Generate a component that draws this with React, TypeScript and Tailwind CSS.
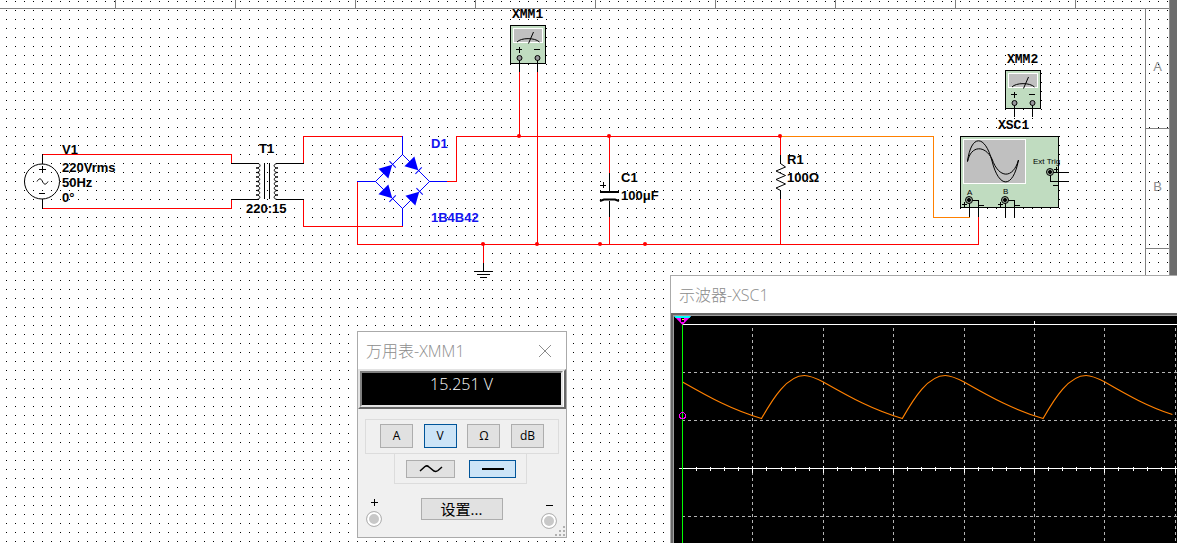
import { useState } from 'react'
import type { ReactNode } from 'react'

const UI_FONT = "font-['Open_Sans','Noto_Sans_CJK_SC',sans-serif]"
const LABEL_FONT = "font-['Liberation_Sans',Arial,sans-serif]"
const MONO_FONT = "font-['Liberation_Mono','Courier_New',monospace]"

function DotGrid() {
  return (
    <div
      aria-hidden="true"
      className="absolute inset-0 bg-[conic-gradient(from_270deg_at_1px_1px,#000_90deg,transparent_0)] bg-[length:9px_9px] bg-[position:6px_1px]"
    />
  )
}

function Label({ x, y, children, color = 'fill-black' }: { x: number; y: number; children: ReactNode; color?: string }) {
  return (
    <text x={x} y={y} className={`${LABEL_FONT} text-[13px] font-bold ${color}`}>
      {children}
    </text>
  )
}

function MonoLabel({ x, y, children }: { x: number; y: number; children: ReactNode }) {
  return (
    <text x={x} y={y} className={`${MONO_FONT} fill-black text-[13px] font-bold`}>
      {children}
    </text>
  )
}

function Meter({ x, y }: { x: number; y: number }) {
  return (
    <g transform={`translate(${x} ${y})`} fill="none" stroke="#000">
      <rect x="0.5" y="0.5" width="35" height="38" fill="#c0dcc0" shapeRendering="crispEdges" />
      <rect x="3.5" y="3.5" width="29" height="14" fill="#c0c0c0" stroke="#fff" shapeRendering="crispEdges" />
      <path d="M7 17 C11 12.5 25 12.5 29.500 17 M18.500 18.500 L23.500 7" />
      <path d="M6 24.500h6M9.500 22v6M24 24.500h6" shapeRendering="crispEdges" />
      <path d="M9.500 33v14M27.500 33v14" shapeRendering="crispEdges" />
      <circle cx="9.500" cy="33" r="2.500" fill="#98989c" />
      <circle cx="27.500" cy="33" r="2.500" fill="#98989c" />
    </g>
  )
}

function Diode({ x, y, angle }: { x: number; y: number; angle: number }) {
  return (
    <g transform={`translate(${x} ${y}) rotate(${angle})`}>
      <path d="M-6.500 -7 L6 0 L-6.500 7 Z" fill="#00f" />
      <path d="M6.500 -4.500 V4.500" stroke="#00f" />
    </g>
  )
}

function Terminal({ x, y }: { x: number; y: number }) {
  return (
    <g stroke="#000">
      <circle cx={x} cy={y} r="3.500" fill="#9aa89a" />
      <circle cx={x} cy={y} r="1.500" fill="#000" />
    </g>
  )
}

const junctions = [
  [519, 136], [609, 136], [780, 136], [483, 244], [537, 244], [600, 244], [645, 244],
]

function Schematic() {
  return (
    <svg className="absolute inset-0 h-full w-full" role="img" aria-label="Bridge rectifier circuit">
      <g fill="none" shapeRendering="crispEdges">
        <g stroke="#f00">
          <path d="M42.500 154.500H231.500V163M42.500 208.500H231.500V199" />
          <path d="M303.500 163V136.500H402.500M303.500 199V226.500H402.500" />
          <path d="M357.500 181V244.500H978.500V217" />
          <path d="M447 181.500H456.500V136.500H780" />
          <path d="M519.500 72V136M537.500 72V244M483.500 244V263" />
          <path d="M609.500 136V173M609.500 217V244M780.500 136V155M780.500 199V244" />
        </g>
        <path stroke="#ff8000" d="M781 136.500H933.500V217.500H970" />
        <g stroke="#00f">
          <path d="M402.500 136V154M402.500 208V226M357 181.500H376M429 181.500H447" />
        </g>
        <g stroke="#000">
          <path d="M42.500 155V164M42.500 199V208M231 163.500H259M231 199.500H259M277 163.500H304M277 199.500H304" />
          <path d="M264.500 163V199M269.500 163V199" />
          <path d="M39 169.500h7M42.500 166v7M39 193.500h6" />
          <path d="M483.500 263V271M474 271.500H493M477 274.500H490M480 277.500H487" />
          <path d="M609.500 173V191M609.500 201V217M600 185.500h6M603.500 182v6" />
          <path d="M780.500 155V164M780.500 190V199" />
        </g>
      </g>

      <g fill="none" stroke="#000">
        <circle cx="42" cy="181.500" r="17.500" />
        <path d="M37 181.500 C39 178 41 178 42.500 181.500 S46 185 48 181.500" />
        <path d="M258 163.500C261 164 261 168 256 168C261 168 261 172.500 256 172.500C261 172.500 261 177 256 177C261 177 261 181.500 256 181.500C261 181.500 261 186 256 186C261 186 261 190.500 256 190.500C261 190.500 261 195 256 195C261 195 261 199 257 199.500" />
        <path d="M277 163.500C273 164 273 168 278 168C273 168 273 172.500 278 172.500C273 172.500 273 177 278 177C273 177 273 181.500 278 181.500C273 181.500 273 186 278 186C273 186 273 190.500 278 190.500C273 190.500 273 195 278 195C273 195 273 199 277 199.500" />
        <path d="M600 192H619" strokeWidth="2" />
        <path d="M600 201 L604 199.500 H615 L619 201" strokeWidth="2" />
        <path d="M780.500 163.500L785.500 167L776 171L785.500 175.500L776 179.500L785.500 184L776 188L780.500 190.500" />
      </g>

      <path d="M402.500 154.500L429.500 181.500L402.500 208.500L375.500 181.500Z" fill="none" stroke="#00f" />
      <Diode x={388} y={169} angle={-45} />
      <Diode x={414} y={166} angle={45} />
      <Diode x={388} y={194} angle={45} />
      <Diode x={415} y={196} angle={-45} />

      {junctions.map(([x, y]) => (
        <circle key={`${x}-${y}`} cx={x} cy={y} r="2" fill="#f00" />
      ))}

      <Meter x={510} y={25} />
      <Meter x={1005} y={70} />

      <g fill="none" stroke="#000">
        <rect x="960.500" y="136.500" width="98" height="71" fill="#c0dcc0" shapeRendering="crispEdges" />
        <rect x="963.500" y="139.500" width="62" height="44" fill="#c0c0c0" stroke="#fff" shapeRendering="crispEdges" />
        <path d="M967.500 161.500C971 134 985 134 992 161C999 189 1013 189 1018.500 160" />
        <path d="M967.500 161.500C971 145 985 145 992 159C999 179 1013 179 1018.500 160" />
        <path
          shapeRendering="crispEdges"
          d="M969.500 200V217M969.500 200.500H978.500V217M1005.500 200V217M1005.500 200.500H1014.500V217M1050.500 172.500H1069M1050.500 172V181.500H1069"
        />
        <path
          shapeRendering="crispEdges"
          d="M962 204.500h5M964.500 202v5M979 205.500h5M998 204.500h5M1000.500 202v5M1015 205.500h5M1054 169.500h5M1056.500 167v5M1053 185.500h5"
        />
      </g>
      <Terminal x={969} y={200} />
      <Terminal x={1005} y={200} />
      <Terminal x={1050} y={172} />

      <Label x={62} y={154}>V1</Label>
      <Label x={62} y={172}>220Vrms</Label>
      <Label x={62} y={187}>50Hz</Label>
      <Label x={62} y={202}>0°</Label>
      <Label x={259} y={153}>T1</Label>
      <Label x={246} y={213}>220:15</Label>
      <Label x={431} y={148} color="fill-[#1414f0]">D1</Label>
      <Label x={431} y={222} color="fill-[#1414f0]">1B4B42</Label>
      <Label x={621} y={182}>C1</Label>
      <Label x={621} y={200}>100μF</Label>
      <Label x={787} y={164}>R1</Label>
      <Label x={787} y={182}>100Ω</Label>
      <MonoLabel x={512} y={18}>XMM1</MonoLabel>
      <MonoLabel x={1007} y={63}>XMM2</MonoLabel>
      <MonoLabel x={998} y={129}>XSC1</MonoLabel>
      <g className={`${LABEL_FONT} fill-black text-[8px]`}>
        <text x="1033" y="164">Ext Trig</text>
        <text x="967" y="195">A</text>
        <text x="1003" y="194">B</text>
      </g>
    </svg>
  )
}

function TopRuler() {
  return (
    <div className="flex h-[9px] w-full overflow-hidden border-b border-[#808080]">
      <div className="w-[116px] shrink-0 border-r border-[#808080]" />
      {Array.from({ length: 8 }, (_, i) => (
        <div key={i} className="w-[120px] shrink-0 border-r border-[#808080]" />
      ))}
    </div>
  )
}

function SideRuler() {
  return (
    <div className={`flex w-6 shrink-0 flex-col border-l border-[#808080] text-[13px] text-[#8c8c8c] ${LABEL_FONT}`}>
      {['A', 'B', ''].map((zone, i) => (
        <div key={i} className="flex h-[120px] items-center justify-center border-b border-[#808080] pb-1">
          {zone}
        </div>
      ))}
    </div>
  )
}

function MeterButton({
  label,
  active,
  onClick,
  size,
  children,
}: {
  label: string
  active: boolean
  onClick: () => void
  size: string
  children: ReactNode
}) {
  return (
    <button
      type="button"
      aria-label={label}
      aria-pressed={active}
      onClick={onClick}
      className={`flex items-center justify-center border text-xs text-black ${size} ${
        active ? 'border-[#005499] bg-[#cce4f7]' : 'border-[#adadad] bg-[#e1e1e1]'
      }`}
    >
      {children}
    </button>
  )
}

function Socket() {
  return <span className="block h-4 w-4 rounded-full border border-[#b4b4b4] bg-[#c8c8c8] shadow-[inset_0_0_0_2px_#fff]" />
}

function Multimeter() {
  const [quantity, setQuantity] = useState('V')
  const [mode, setMode] = useState('DC')
  return (
    <section
      aria-label="万用表-XMM1"
      className={`absolute top-[331px] left-[357px] flex w-[210px] flex-col border border-[#aaa] bg-[#f0f0f0] ${UI_FONT}`}
    >
      <header className="flex h-[37px] items-center justify-between bg-white pr-3.5 pl-2">
        <h2 className="text-base font-light text-[#8c8c8c]">万用表-XMM1</h2>
        <button type="button" aria-label="关闭" className="text-[#8c8c8c]">
          <svg width="14" height="14" viewBox="0 0 14 14" fill="none" stroke="currentColor">
            <path d="M1 1L13 13M13 1L1 13" />
          </svg>
        </button>
      </header>
      <div className="border-2 border-t-[#e3e3e3] border-r-[#696969] border-b-[#696969] border-l-[#e3e3e3] bg-white pr-px">
        <div className="border-2 border-t-[#808080] border-r-[#e3e3e3] border-b-[#e3e3e3] border-l-[#808080]">
          <output className="block h-8 bg-black text-center text-base leading-[22px] font-light text-white">15.251 V</output>
        </div>
      </div>
      <div className="flex flex-col px-[7px] pt-2.5">
        <div className="flex w-full justify-between border border-[#dcdcdc] px-3.5 pt-1 pb-[5px]">
          {['A', 'V', 'Ω', 'dB'].map((q) => (
            <MeterButton key={q} label={q} active={quantity === q} onClick={() => setQuantity(q)} size="h-6 w-[33px]">
              {q}
            </MeterButton>
          ))}
        </div>
        <div className="-mt-px ml-[29px] flex w-[133px] justify-between border border-[#dcdcdc] pt-1.5 pr-2.5 pb-[5px] pl-[11px]">
          <MeterButton label="AC" active={mode === 'AC'} onClick={() => setMode('AC')} size="h-[18px] w-[49px]">
            <svg width="24" height="10" viewBox="0 0 24 10" fill="none" stroke="#000" strokeWidth="1.500">
              <path d="M1 7L6 2.500Q8 1 10 3L15 7Q17 8 19 6.500L23 3" />
            </svg>
          </MeterButton>
          <MeterButton label="DC" active={mode === 'DC'} onClick={() => setMode('DC')} size="h-[18px] w-[47px]">
            <span className="h-0.5 w-[22px] bg-black" />
          </MeterButton>
        </div>
      </div>
      <footer className="flex h-[53px] items-start justify-between pt-3.5 pr-[9px] pl-2">
        <div className="flex flex-col items-center gap-px">
          <svg width="7" height="12" viewBox="0 0 7 12" stroke="#000" role="img" aria-label="plus" shapeRendering="crispEdges">
            <path d="M0 4.500H7M3.500 1V8" />
          </svg>
          <Socket />
        </div>
        <button type="button" className="flex h-[22px] w-[82px] items-center justify-center border border-[#adadad] bg-[#e1e1e1] text-[15px] text-black">
          设置...
        </button>
        <div className="flex flex-col items-center gap-px pt-0.5">
          <svg width="7" height="12" viewBox="0 0 7 12" stroke="#000" role="img" aria-label="minus" shapeRendering="crispEdges">
            <path d="M0 5.500H7" />
          </svg>
          <Socket />
        </div>
      </footer>
      <svg className="absolute right-0 bottom-0" width="11" height="11" fill="#b0b0b0" aria-hidden="true">
        <path d="M8 0h2v2h-2zM4 4h2v2h-2zM8 4h2v2h-2zM0 8h2v2h-2zM4 8h2v2h-2zM8 8h2v2h-2z" />
      </svg>
    </section>
  )
}

const majors = [78, 149, 219, 290, 360, 430, 501]
const minors = Array.from({ length: 35 }, (_, i) => Math.round(8 + (i + 1) * 14.08))

function Trace() {
  const decay = 'c28 16 50 28 79 36.500'
  const rise = 'c12 -21 26 -43 43 -43c6 0 12 3 18.800 6.500'
  return (
    <path
      d={`M8.500 66${decay}${rise}${decay}${rise}${decay}${rise}c24 14 44 25 67.500 32.500`}
      fill="none"
      stroke="#ff8000"
      strokeWidth="1.200"
    />
  )
}

function Oscilloscope() {
  return (
    <section
      aria-label="示波器-XSC1"
      className={`absolute top-[275px] right-0 bottom-0 left-[670px] flex flex-col border-t border-l border-[#aaa] bg-white ${UI_FONT}`}
    >
      <header className="flex h-[37px] shrink-0 items-center pl-2">
        <h2 className="text-base font-light text-[#8c8c8c]">示波器-XSC1</h2>
      </header>
      <div className="flex min-h-0 flex-1 border-t-2 border-l-2 border-[#696969] bg-black">
        <div className="min-h-0 flex-1 border-t border-l border-[#a0a0a0]">
          <svg className="block h-full w-full" role="img" aria-label="Channel A waveform">
            <g shapeRendering="crispEdges" fill="none">
              <g stroke="#b4b4b4" strokeDasharray="3 3">
                {majors.map((x) => (
                  <path key={x} d={`M${x}.5 12V600`} />
                ))}
                {[56, 104, 200].map((y) => (
                  <path key={y} d={`M8 ${y}.5H2000`} />
                ))}
              </g>
              <path d="M8 8.500H2000M360.500 5V8M5 152.500H2000" stroke="#fff" />
              {minors.map((x) => (
                <path key={x} d={`M${x}.5 151V155`} stroke="#fff" />
              ))}
              {majors.map((x) => (
                <path key={x} d={`M${x}.5 150V157`} stroke="#fff" />
              ))}
            </g>
            <Trace />
            <path d="M8.500 8V1000" stroke="#0f0" shapeRendering="crispEdges" />
            <path d="M0 0H17L8.500 9Z" fill="#f0f" />
            <path d="M0 0H17L15.500 2H1.500Z" fill="#0ff" />
            <path d="M7 2h3v4H7z" fill="#000" />
            <path d="M8 3h2v1H8z" fill="#ff0" />
            <circle cx="8.500" cy="99.500" r="3" fill="none" stroke="#f0f" shapeRendering="crispEdges" />
          </svg>
        </div>
      </div>
    </section>
  )
}

export default function App() {
  return (
    <main className="relative flex h-screen w-full overflow-hidden bg-white">
      <DotGrid />
      <div className="flex min-w-0 flex-1 flex-col">
        <TopRuler />
        <div className="flex min-h-0 flex-1 justify-end">
          <SideRuler />
        </div>
      </div>
      <div className="relative w-2 shrink-0 border-l border-[#909090] bg-[#6c6c6c]" />
      <Schematic />
      <Multimeter />
      <Oscilloscope />
    </main>
  )
}
